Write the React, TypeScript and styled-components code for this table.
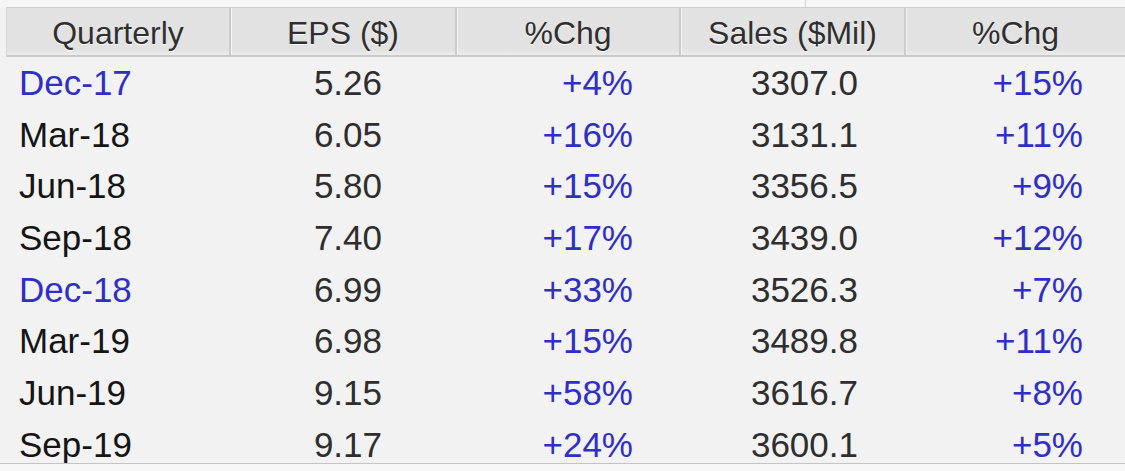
import styled, { createGlobalStyle } from 'styled-components';

const GlobalStyle = createGlobalStyle`
    html, body {
        margin: 0;
        padding: 0;
        background: #f2f2f2;
        font-family: 'Liberation Sans', Arial, sans-serif;
    }
`;

const COLS = '222px 226px 224px 225px 1fr';

type Align = 'left' | 'center' | 'right';

const headers = ['Quarterly', 'EPS ($)', '%Chg', 'Sales ($Mil)', '%Chg'];

const rows = [
    { q: 'Dec-17', eps: '5.26', epsChg: '+4%', sales: '3307.0', salesChg: '+15%', link: true },
    { q: 'Mar-18', eps: '6.05', epsChg: '+16%', sales: '3131.1', salesChg: '+11%' },
    { q: 'Jun-18', eps: '5.80', epsChg: '+15%', sales: '3356.5', salesChg: '+9%' },
    { q: 'Sep-18', eps: '7.40', epsChg: '+17%', sales: '3439.0', salesChg: '+12%' },
    { q: 'Dec-18', eps: '6.99', epsChg: '+33%', sales: '3526.3', salesChg: '+7%', link: true },
    { q: 'Mar-19', eps: '6.98', epsChg: '+15%', sales: '3489.8', salesChg: '+11%' },
    { q: 'Jun-19', eps: '9.15', epsChg: '+58%', sales: '3616.7', salesChg: '+8%' },
    { q: 'Sep-19', eps: '9.17', epsChg: '+24%', sales: '3600.1', salesChg: '+5%' },
];

const App = () => {
    return (
        <Page>
            <GlobalStyle />
            <TopStrip>
                <StripPane />
                <StripPane $last />
            </TopStrip>
            <HeaderRow>
                {headers.map((title, i) => (
                    <HeaderCell key={i} $first={i === 0}>
                        {title}
                    </HeaderCell>
                ))}
            </HeaderRow>
            <Body>
                {rows.map((r) => (
                    <Row key={r.q}>
                        <Cell $align="left" $pad={13} $tone={r.link ? 'blue' : 'dark'}>
                            {r.q}
                        </Cell>
                        <Cell $align="right" $pad={73} $tone="grey">
                            {r.eps}
                        </Cell>
                        <Cell $align="right" $pad={46} $tone="blue">
                            {r.epsChg}
                        </Cell>
                        <Cell $align="right" $pad={46} $tone="grey">
                            {r.sales}
                        </Cell>
                        <Cell $align="right" $pad={42} $tone="blue">
                            {r.salesChg}
                        </Cell>
                    </Row>
                ))}
            </Body>
            <Footer />
        </Page>
    );
};

const Page = styled.div`
    width: 1125px;
    height: 471px;
    overflow: hidden;
    background: #f2f2f2;
`;

const TopStrip = styled.div`
    display: flex;
    height: 7px;
    background: #f6f6f6;
`;

const StripPane = styled.div<{ $last?: boolean }>`
    width: ${(p) => (p.$last ? 'auto' : '805px')};
    flex: ${(p) => (p.$last ? '1' : 'none')};
    border-right: ${(p) => (p.$last ? 'none' : '1px solid #d6d6d6')};
`;

const HeaderRow = styled.div`
    display: grid;
    grid-template-columns: ${COLS};
    margin-left: 6px;
    height: 47px;
    border-top: 1px solid #cdcdcd;
    border-left: 1px solid #d4d4d4;
    border-bottom: 2px solid #c9c9c9;
    background: linear-gradient(#e2e2e2 0%, #e2e2e2 88%, #ebebeb 100%);
`;

const HeaderCell = styled.div<{ $first?: boolean }>`
    display: flex;
    align-items: center;
    justify-content: center;
    padding-top: 4px;
    font-size: 32px;
    color: #2f2f2f;
    text-shadow: 0 1px 0 #ffffff;
    border-left: ${(p) => (p.$first ? 'none' : '2px solid #cbcbcb')};
    box-shadow: ${(p) => (p.$first ? 'none' : 'inset 1px 0 0 #f3f3f3')};
    white-space: nowrap;
`;

const Body = styled.div`
    height: 406px;
    overflow: hidden;
    border-bottom: 1px solid #c4c4c4;
    background: #f2f2f2;
`;

const Row = styled.div`
    display: grid;
    grid-template-columns: 223px 226px 224px 225px 1fr;
    margin-left: 6px;
    height: 51.7px;
`;

const toneColor = {
    blue: '#2f2fc6',
    dark: '#151515',
    grey: '#2e2e2e',
};

const Cell = styled.div<{ $align: Align; $pad: number; $tone: keyof typeof toneColor }>`
    display: flex;
    align-items: center;
    justify-content: ${(p) => (p.$align === 'left' ? 'flex-start' : p.$align === 'right' ? 'flex-end' : 'center')};
    padding-left: ${(p) => (p.$align === 'left' ? p.$pad : 0)}px;
    padding-right: ${(p) => (p.$align === 'right' ? p.$pad : 0)}px;
    font-size: 35px;
    color: ${(p) => toneColor[p.$tone]};
    white-space: nowrap;
`;

const Footer = styled.div`
    height: 8px;
    background: #f7f7f7;
`;

export default App;
